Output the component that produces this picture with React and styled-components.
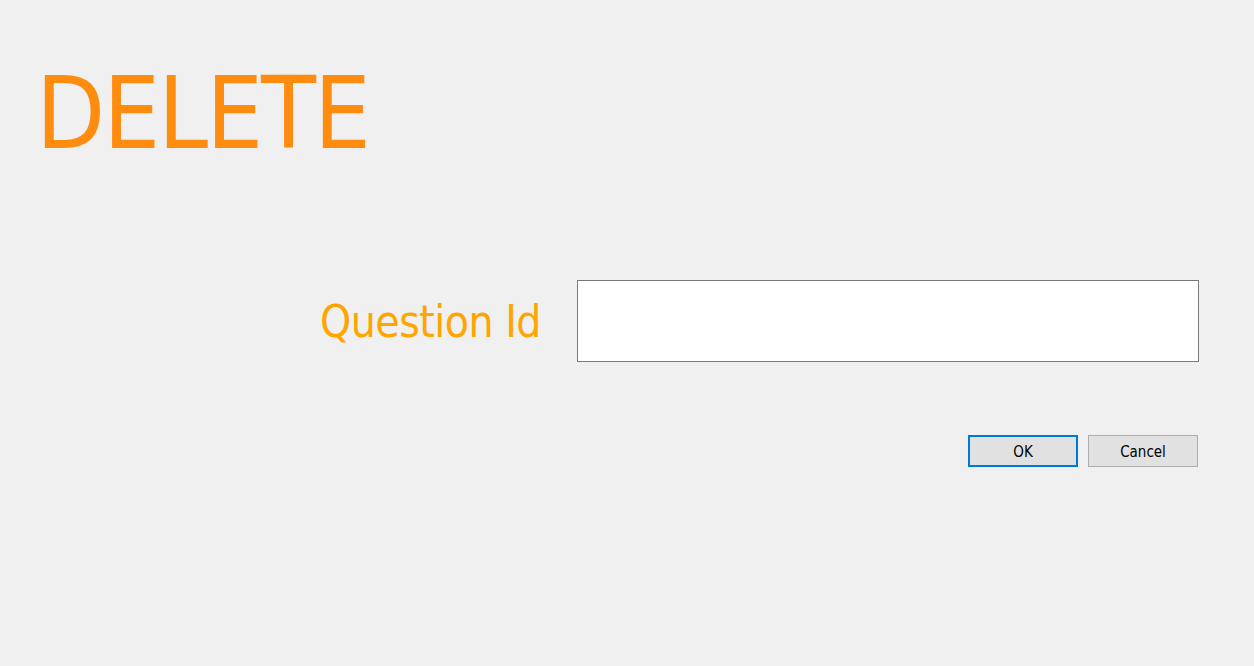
import React from "react";
import styled, { createGlobalStyle } from "styled-components";

const Global = createGlobalStyle`
  html, body { margin: 0; padding: 0; background: #f0f0f0; }
  body { font-family: Tahoma, "DejaVu Sans", sans-serif; }
`;

const Page = styled.div`
  width: 1254px;
  height: 666px;
  background: #f0f0f0;
  display: flex;
  flex-direction: column;
  overflow: hidden;
`;

const Title = styled.h1`
  margin: 0;
  padding: 54px 0 0 36px;
  font-family: "DejaVu Sans Condensed", "DejaVu Sans", sans-serif;
  font-stretch: condensed;
  font-weight: normal;
  font-size: 100px;
  line-height: 120px;
  color: #ff8c0f;
  letter-spacing: -2px;
`;

const Form = styled.div`
  margin-top: 106px;
  display: grid;
  grid-template-columns: 541px 622px;
  column-gap: 36px;
  align-items: center;
`;

const Label = styled.label`
  justify-self: end;
  font-family: "DejaVu Sans Condensed", "DejaVu Sans", sans-serif;
  font-stretch: condensed;
  font-size: 44px;
  color: #ffa500;
  letter-spacing: -0.5px;
`;

const Input = styled.input`
  box-sizing: border-box;
  width: 622px;
  height: 82px;
  border: 1px solid #7a7a7a;
  background: #fff;
  outline: none;
`;

const Buttons = styled.div`
  margin-top: 73px;
  display: flex;
  justify-content: flex-end;
  gap: 10px;
  padding-right: 56px;
`;

const Button = styled.button`
  box-sizing: border-box;
  width: 110px;
  height: 32px;
  padding: 2px 0 0;
  background: #e1e1e1;
  border: ${(p) => (p.$primary ? "2px solid #0078d7" : "1px solid #adadad")};
  font-family: "DejaVu Sans Condensed", "DejaVu Sans", sans-serif;
  font-stretch: condensed;
  font-size: 15px;
  color: #000;
`;

export default function App() {
  return (
    <Page>
      <Global />
      <Title>DELETE</Title>
      <Form>
        <Label>Question Id</Label>
        <Input />
      </Form>
      <Buttons>
        <Button $primary>OK</Button>
        <Button>Cancel</Button>
      </Buttons>
    </Page>
  );
}
